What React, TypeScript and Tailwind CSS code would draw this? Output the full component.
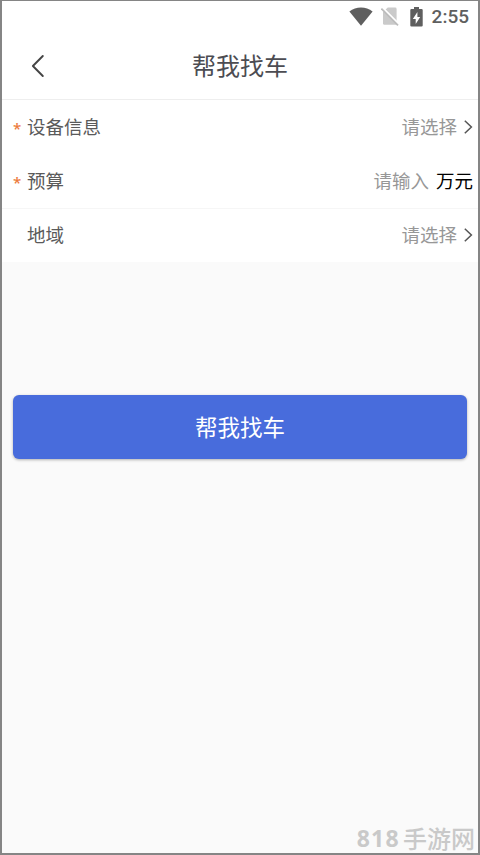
import type { ReactNode } from "react";

function StatusBar() {
  return (
    <div className="flex h-8 items-center justify-end pr-[9px] text-[#5f5f5f]">
      {/* Wifi */}
      <svg className="mr-[8px] h-5 w-6" viewBox="0 0 24 20" fill="currentColor">
        <path d="M0.4 4.6C7 -1 17 -1 23.6 4.6L12 18.8Z" />
      </svg>
      {/* No sim */}
      <svg className="mr-[11px] h-5 w-[18px]" viewBox="0 0 18 20">
        <path d="M6.8 0.6H14.2A1.4 1.4 0 0 1 15.6 2V17.8H3.4A1.4 1.4 0 0 1 2 16.4V5Z" fill="#cacaca" />
        <path d="M1.8 1L18 17.2" stroke="#fff" strokeWidth="2" />
        <path d="M0.4 1.6L17 18.4" stroke="#bcbcbc" strokeWidth="1.7" />
      </svg>
      {/* Battery */}
      <svg className="mr-[9px] h-5 w-[13px]" viewBox="0 0 13 20">
        <path d="M4 0H9V2H11.6Q12.7 2 12.7 3.1V18.4Q12.7 19.5 11.6 19.5H1.4Q0.3 19.5 0.3 18.4V3.1Q0.3 2 1.4 2H4Z" fill="#5f5f5f" />
        <path d="M7.4 5L2.8 12H5.7V17L10.2 9.9H7.4Z" fill="#fff" />
      </svg>
      <span className="font-['Roboto',sans-serif] text-[19px] leading-5 font-medium">2:55</span>
    </div>
  );
}

function Arrow() {
  return (
    <svg className="mt-[2px] ml-[6px] h-[14px] w-[10px]" viewBox="0 0 10 14" fill="none">
      <path d="M1.8 0.8L8.4 7L1.8 13.2" stroke="#555" strokeWidth="1.5" />
    </svg>
  );
}

function Row({
  label,
  required,
  children,
}: {
  label: string;
  required?: boolean;
  children: ReactNode;
}) {
  return (
    <div className="flex h-[54px] items-center bg-white pr-[5px] pb-[2px] pl-[11px] text-[18.5px] leading-6">
      <span className="w-[14px] pt-[3px] font-['Noto_Sans',sans-serif] text-[15px] font-medium text-[#ec7a3c]">
        {required ? "*" : ""}
      </span>
      <span className="text-[#5a5a5a]">{label}</span>
      <div className="ml-auto flex items-center text-[#979797]">{children}</div>
    </div>
  );
}

export default function App() {
  return (
    <div className="relative flex h-[855px] w-[480px] flex-col overflow-hidden border-t border-r-2 border-b-2 border-l-2 border-[#858585] bg-[#fafafa] font-['Noto_Sans_CJK_SC',sans-serif]">
      <header className="h-[99px] border-b border-[#eeeeee] bg-white">
        <StatusBar />
        <div className="grid h-[66px] grid-cols-[80px_1fr_80px] items-center pb-[2px]">
          <button type="button" aria-label="返回" className="pt-px pl-[29px]">
            <svg className="h-6 w-[14px]" viewBox="0 0 14 24" fill="none">
              <path
                d="M11.8 2L1.9 12L11.8 22"
                stroke="#444"
                strokeWidth="1.9"
                strokeLinecap="round"
                strokeLinejoin="round"
              />
            </svg>
          </button>
          <h1 className="text-center text-[24px] leading-8 text-[#4c4c52]">帮我找车</h1>
        </div>
      </header>

      <main>
        <Row label="设备信息" required>
          <span>请选择</span>
          <Arrow />
        </Row>
        <div className="h-[54px] overflow-hidden shadow-[0_1px_0_#f6f6f6] relative">
          <Row label="预算" required>
            <span>请输入</span>
            <span className="ml-[7px] text-black">万元</span>
          </Row>
        </div>
        <Row label="地域">
          <span>请选择</span>
          <Arrow />
        </Row>
        <div className="px-[11px] pt-[133px]">
          <button
            type="button"
            className="h-[64px] w-full rounded-[6px] bg-[#486cdc] text-[22.5px] text-white shadow-[0_1px_3px_rgba(0,0,0,0.3)]"
          >
            帮我找车
          </button>
        </div>
      </main>

      <div className="absolute right-[3px] bottom-0 flex items-center leading-[30px] text-[#c9c9c9]">
        <span className="mr-[3px] font-['Noto_Sans',sans-serif] text-[23px] font-bold tracking-[1.3px]">818</span>
        <span className="text-[24px] font-medium">手游网</span>
      </div>
    </div>
  );
}
